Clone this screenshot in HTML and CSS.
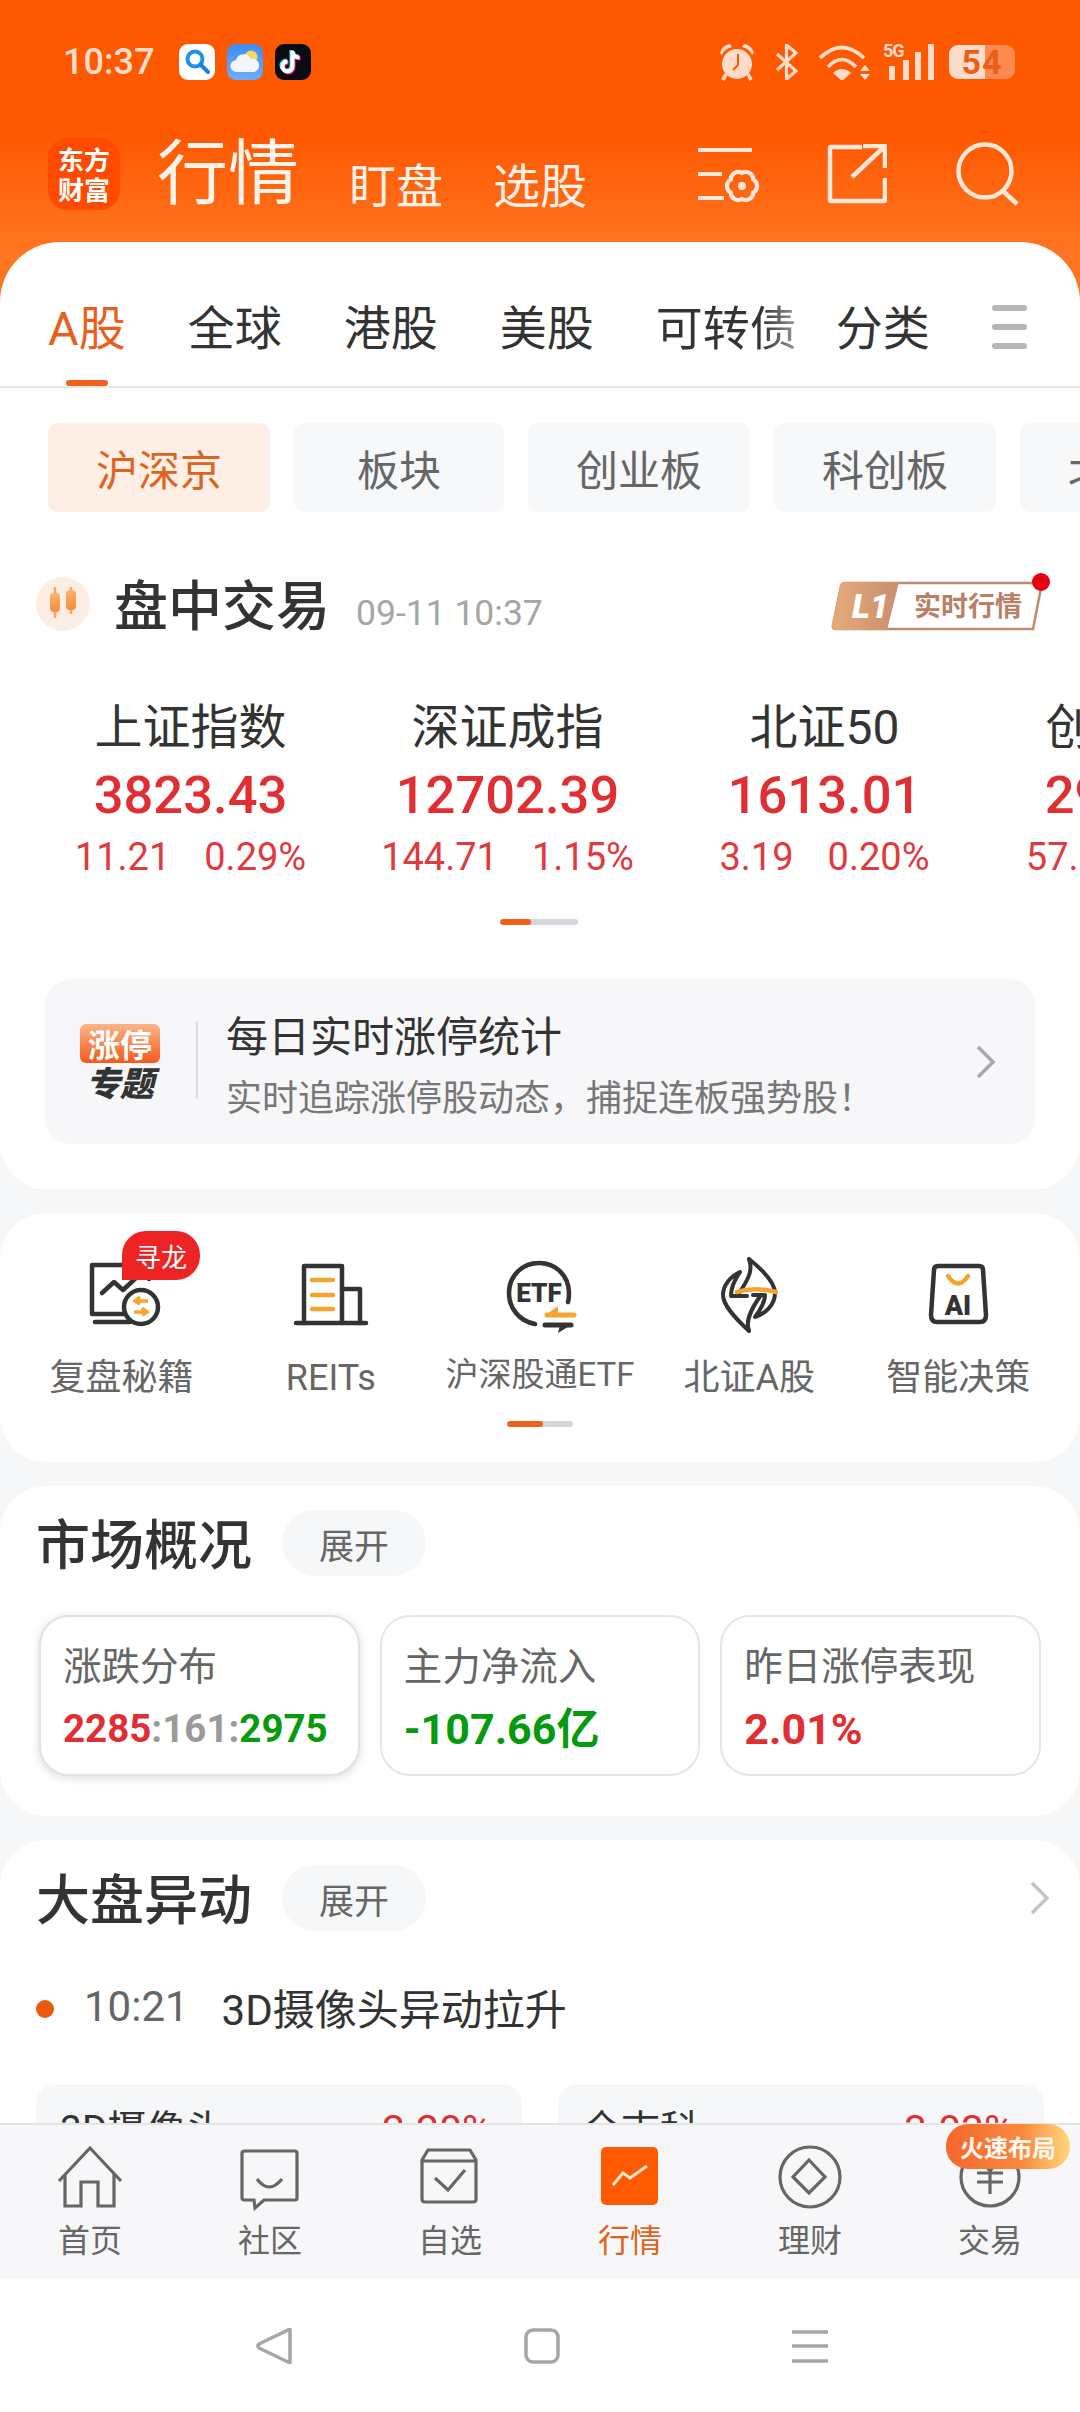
FILE: index.html
```html
<!DOCTYPE html>
<html lang="zh-CN">
<head>
<meta charset="utf-8">
<title>行情</title>
<link rel="stylesheet" href="styles.css">
</head>
<body>
<div class="app">
  <main class="main">
    <div class="hero">
      <div class="status">
        <span class="time">10:37</span>
        <div class="notif">
          <svg class="app-ic" viewBox="0 0 36 36"><rect width="36" height="36" rx="9" fill="#fff"/><circle cx="16" cy="15" r="7.5" fill="none" stroke="#1f93e8" stroke-width="4"/><path d="M22 21l7 7" stroke="#1f7fe0" stroke-width="4" stroke-linecap="round"/></svg>
          <svg class="app-ic" viewBox="0 0 36 36"><defs><linearGradient id="wx" x1="0" y1="0" x2="0" y2="1"><stop offset="0" stop-color="#3f8cf5"/><stop offset="1" stop-color="#6aaefc"/></linearGradient></defs><rect width="36" height="36" rx="9" fill="url(#wx)"/><circle cx="24" cy="13" r="6.5" fill="#f8d860"/><path d="M10 28a6 6 0 0 1-1-12 8 8 0 0 1 15-1 6.5 6.5 0 0 1 3 13z" fill="#f3f6fc"/></svg>
          <svg class="app-ic" viewBox="0 0 36 36"><rect width="36" height="36" rx="9" fill="#0b0b14"/><g fill="none" stroke-width="4"><path d="M18.5 8v15.5a5 5 0 1 1-5-5M18.5 8c0 4 3 6.500 7 6.500" stroke="#f0285a"/><path d="M16.500 6v15.500a5 5 0 1 1-5-5M16.500 6c0 4 3 6.500 7 6.500" stroke="#4fe3e6"/><path d="M17.500 7v15.500a5 5 0 1 1-5-5M17.500 7c0 4 3 6.500 7 6.500" stroke="#fff"/></g></svg>
        </div>
        <div class="sys">
          <svg class="sys-alarm" viewBox="0 0 38 38"><circle cx="19" cy="21" r="15" fill="#ffdcca"/><path d="M2 10Q4 2 12 1L14 4Q6 6 4 12zM36 10Q34 2 26 1L24 4Q32 6 34 12z" fill="#ffdcca"/><path d="M8 31l-3 6M30 31l3 6" stroke="#ffdcca" stroke-width="3.500"/><path d="M20 11v11l-5 5" fill="none" stroke="#f65a0c" stroke-width="2"/></svg>
          <svg class="sys-bt" viewBox="0 0 23 36"><path d="M2 10L21 27 11.500 35V1L21 9 2 26" fill="none" stroke="#ffdcca" stroke-width="3.200"/></svg>
          <svg class="sys-wifi" viewBox="0 0 52 36"><g fill="none" stroke="#ffdcca" stroke-width="3.600"><path d="M2 14Q24-7 46 14"/><path d="M10 23Q24 8 38 23"/></g><path d="M15 29Q24 21 33 29L24 37z" fill="#ffdcca"/><path d="M42 27l5-6 5 6zM42 30h10l-5 6z" fill="#ffdcca"/></svg>
          <div class="sig">
            <span class="five">5G</span>
            <svg class="sig-bars" viewBox="0 0 46 36"><path d="M0 22h6v14H0zM14 16h6v20h-6zM26 8h6v28h-6zM39 0h6v36h-6z" fill="#ffdcca"/></svg>
          </div>
          <div class="batt"><span class="batt-num">54</span></div>
        </div>
      </div>
      <header class="head">
        <div class="logo"><span>东方</span><span>财富</span></div>
        <h1 class="head-main">行情</h1>
        <span class="head-sub head-sub-a">盯盘</span>
        <span class="head-sub head-sub-b">选股</span>
        <div class="head-icons">
          <svg class="hi-set" viewBox="0 0 64 58"><g fill="none" stroke="#ffe7da" stroke-width="4.200"><path d="M1 5h54M1 29h24M1 53h26"/><path d="M56.300 47.500A7.500 7.500 0 0 1 45 54 7.500 7.500 0 0 1 33.700 47.500 7.500 7.500 0 0 1 33.700 34.500 7.500 7.500 0 0 1 45 28 7.500 7.500 0 0 1 56.300 34.500 7.500 7.500 0 0 1 56.300 47.500Z"/></g><circle cx="45" cy="41" r="4" fill="#ffe7da"/></svg>
          <svg class="hi-share" viewBox="0 0 60 60"><g fill="none" stroke="#ffe7da" stroke-width="4.500"><path d="M35 3H4a1 1 0 0 0-1 1v52a1 1 0 0 0 1 1h53a1 1 0 0 0 1-1V34"/><path d="M25 33L57 3M36 2h22v22"/></g></svg>
          <svg class="hi-search" viewBox="0 0 64 64"><g fill="none" stroke="#ffe7da" stroke-width="4.500"><circle cx="29" cy="29" r="26.500"/><path d="M47 49l14 13"/></g></svg>
        </div>
      </header>

      <section class="card card-first">
        <nav class="tabs">
          <span class="tab tab-on">A股</span>
          <span class="tab">全球</span>
          <span class="tab">港股</span>
          <span class="tab">美股</span>
          <span class="tab tab-fade">可转债</span>
          <span class="tab tab-near">分类</span>
          <span class="tab-menu"><i></i><i></i><i></i></span>
        </nav>
        <div class="chips">
          <span class="chip chip-on">沪深京</span>
          <span class="chip chip-sm">板块</span>
          <span class="chip">创业板</span>
          <span class="chip">科创板</span>
          <span class="chip">北交所</span>
        </div>
        <div class="trade-head">
          <svg class="candle" viewBox="0 0 54 54"><defs><linearGradient id="cd" x1="0" y1="0" x2="0" y2="1"><stop offset="0" stop-color="#ffb36b"/><stop offset="1" stop-color="#f98a3c"/></linearGradient></defs><ellipse cx="27" cy="27" rx="27" ry="27" fill="#fdeee4"/><path d="M19 10v31M35 10v27" stroke="#fba45c" stroke-width="2.500"/><rect x="14" y="16" width="10" height="19" rx="4" fill="url(#cd)"/><rect x="30" y="13" width="10" height="20" rx="4" fill="url(#cd)"/></svg>
          <h2 class="title">盘中交易</h2>
          <span class="stamp">09-11 10:37</span>
          <svg class="l1" viewBox="0 0 224 60"><defs><linearGradient id="l1g" x1="0" y1="0" x2="1" y2="0"><stop offset="0" stop-color="#e6aa78"/><stop offset="1" stop-color="#c98f70"/></linearGradient></defs><path d="M14 11H212L203 57H6Q2 57 3 53L11 14Q12 11 14 11Z" fill="#fff" stroke="#c08b70" stroke-width="2.500"/><path d="M14 10H69L57 58H6Q1 58 2 53L10 14Q11 10 14 10Z" fill="url(#l1g)"/><text class="l1-a" x="22" y="46">L1</text><text class="l1-b" x="84" y="44">实时行情</text><circle cx="211" cy="10" r="9" fill="#e60012"/></svg>
        </div>
        <div class="indices">
          <div class="idx">
            <div class="idx-name">上证指数</div>
            <div class="idx-val">3823.43</div>
            <div class="idx-chg"><span>11.21</span><span>0.29%</span></div>
          </div>
          <div class="idx">
            <div class="idx-name">深证成指</div>
            <div class="idx-val">12702.39</div>
            <div class="idx-chg"><span>144.71</span><span>1.15%</span></div>
          </div>
          <div class="idx">
            <div class="idx-name">北证50</div>
            <div class="idx-val">1613.01</div>
            <div class="idx-chg"><span>3.19</span><span>0.20%</span></div>
          </div>
          <div class="idx">
            <div class="idx-name">创业板指</div>
            <div class="idx-val">2921.76</div>
            <div class="idx-chg"><span>57.25</span><span>1.96%</span></div>
          </div>
        </div>
        <div class="pager pager-a"><i></i></div>
        <div class="banner">
          <div class="ban-logo">
            <span class="ban-top">涨停</span>
            <span class="ban-bot">专题</span>
          </div>
          <div class="ban-text">
            <div class="ban-title">每日实时涨停统计</div>
            <div class="ban-sub">实时追踪涨停股动态，捕捉连板强势股！</div>
          </div>
          <svg class="chev" viewBox="0 0 20 34"><path d="M2 2l15 15L2 32" fill="none" stroke="#a9a9ad" stroke-width="3.500"/></svg>
        </div>
      </section>
    </div>

    <section class="card quick">
      <div class="quick-grid">
        <div class="q">
          <span class="q-tag">寻龙</span>
          <svg class="q-ic" viewBox="0 0 80 80"><g fill="none" stroke="#333" stroke-width="4.500" stroke-linecap="round" stroke-linejoin="round"><path d="M50 10H10V59H47"/><path d="M67 10V24"/><path d="M13 67H48"/><path d="M20 38L32 27 41 35 56 21"/><circle cx="59" cy="52" r="17" fill="#fff"/></g><path d="M66 46H54M58 42l-5 4 5 3M52 57H64M60 53l5 4-5 3" fill="none" stroke="#f5a52f" stroke-width="3.500"/></svg>
          <span class="q-label">复盘秘籍</span>
        </div>
        <div class="q">
          <svg class="q-ic" viewBox="0 0 80 80"><g fill="none" stroke="#333" stroke-width="4.500" stroke-linecap="round" stroke-linejoin="round"><path d="M5 68H75"/><path d="M13 68V11H51V68"/><path d="M51 34H69V68"/></g><path d="M21 25H42M21 40H42M21 54H42" stroke="#f5a52f" stroke-width="4.500" stroke-linecap="round"/></svg>
          <span class="q-label">REITs</span>
        </div>
        <div class="q">
          <svg class="q-ic" viewBox="0 0 80 80"><path d="M35 69C19 66 9 53 9 38 9 21 22 8 39 8 56 8 69 21 69 38 69 41 69 44 68 47" fill="none" stroke="#333" stroke-width="4.500" stroke-linecap="round"/><text class="etf" x="39" y="47">ETF</text><path d="M47 60H74" stroke="#f5a52f" stroke-width="5" stroke-linecap="round"/><path d="M47 59L58 51V59Z" fill="#f5a52f"/><path d="M45 70H71" stroke="#333" stroke-width="5" stroke-linecap="round"/><path d="M60 70H71L58 78Z" fill="#333"/></svg>
          <span class="q-label q-label-sm">沪深股通ETF</span>
        </div>
        <div class="q">
          <svg class="q-ic" viewBox="0 0 80 80"><g fill="none" stroke="#333" stroke-width="4" stroke-linejoin="round" stroke-linecap="round"><path d="M40 4C55 16 66 28 66 38 66 50 56 59 46 62 52 54 56 46 56 40H44"/><path d="M40 4C44 14 40 24 30 38"/><path d="M40 76C25 62 14 50 14 40 14 30 22 21 31 17 26 24 22 32 22 41H38"/><path d="M40 76C36 66 42 54 52 40"/></g><path d="M28 37C40 33 55 34 67 37" fill="none" stroke="#f5a52f" stroke-width="4.500" stroke-linecap="round"/></svg>
          <span class="q-label">北证A股</span>
        </div>
        <div class="q">
          <svg class="q-ic" viewBox="0 0 80 80"><path d="M20 11H61Q65 11 65 15L68 60Q68 67 62 67H19Q13 67 13 60L16 15Q16 11 20 11Z" fill="none" stroke="#333" stroke-width="4.500"/><path d="M30 21Q40 36 50 21" fill="none" stroke="#f5a52f" stroke-width="4.500" stroke-linecap="round"/><text class="ai" x="40" y="60">AI</text></svg>
          <span class="q-label">智能决策</span>
        </div>
      </div>
      <div class="pager pager-b"><i></i></div>
    </section>

    <section class="card market">
      <div class="row-head">
        <h2 class="title">市场概况</h2>
        <span class="pill">展开</span>
      </div>
      <div class="stats">
        <div class="stat stat-on">
          <div class="stat-label">涨跌分布</div>
          <div class="stat-val"><span class="red">2285</span><span class="grey">:161:</span><span class="green">2975</span></div>
        </div>
        <div class="stat">
          <div class="stat-label">主力净流入</div>
          <div class="stat-val stat-val-lg green">-107.66亿</div>
        </div>
        <div class="stat">
          <div class="stat-label">昨日涨停表现</div>
          <div class="stat-val stat-val-lg red">2.01%</div>
        </div>
      </div>
    </section>

    <section class="card moves">
      <div class="row-head">
        <h2 class="title">大盘异动</h2>
        <span class="pill">展开</span>
        <svg class="chev chev-end" viewBox="0 0 20 34"><path d="M2 2l15 15L2 32" fill="none" stroke="#c4c4c6" stroke-width="3.500"/></svg>
      </div>
      <div class="move-line">
        <i class="dot"></i>
        <span class="move-time">10:21</span>
        <span class="move-text">3D摄像头异动拉升</span>
      </div>
      <div class="move-cards">
        <div class="move-card"><span>3D摄像头</span><span class="red move-pct">2.20%</span></div>
        <div class="move-card"><span>全志科</span><span class="red move-pct">3.03%</span></div>
      </div>
    </section>
  </main>

  <footer class="tabbar">
    <div class="t">
      <svg class="t-ic" viewBox="0 0 70 70"><path d="M4 38L35 5 66 38M10 31V63H26V39H43V63H59V31"/></svg>
      <span>首页</span>
    </div>
    <div class="t">
      <svg class="t-ic" viewBox="0 0 70 70"><path d="M10 8H60Q62 8 62 10V55Q62 57 60 57H29L20 65 19 57H10Q7 57 7 55V10Q7 8 10 8ZM22 36Q34 52 47 36"/></svg>
      <span>社区</span>
    </div>
    <div class="t">
      <svg class="t-ic" viewBox="0 0 70 70"><path d="M7 17L13 7H55L61 17V56Q61 59 58 59H10Q7 59 7 56ZM7 18H61M20 35L33 47 50 27"/></svg>
      <span>自选</span>
    </div>
    <div class="t t-on">
      <svg class="t-ic-on" viewBox="0 0 70 70"><rect x="6" y="4" width="57" height="58" rx="5" fill="#ff5a00"/><path d="M18 42L28 30 35 35 52 23" fill="none" stroke="#ffe7da" stroke-width="2.800"/></svg>
      <span>行情</span>
    </div>
    <div class="t">
      <svg class="t-ic" viewBox="0 0 70 70"><circle cx="35" cy="34" r="30"/><path d="M34 17L50 34 34 50 18 34Z"/></svg>
      <span>理财</span>
    </div>
    <div class="t">
      <svg class="t-ic" viewBox="0 0 70 70"><circle cx="35" cy="34" r="29"/><path d="M25 16L35 28 45 16M22 30H48M22 39H48M35 28V51"/></svg>
      <span>交易</span>
    </div>
    <span class="fire">火速布局</span>
  </footer>

  <div class="sysnav">
    <svg class="nav-ic" viewBox="0 0 36 36"><path d="M34 2V34Q34 36 32 34L3 20Q1 18 3 16L32 2Q34 0 34 2Z"/></svg>
    <svg class="nav-ic" viewBox="0 0 36 36"><rect x="2" y="2" width="32" height="32" rx="7"/></svg>
    <svg class="nav-ic" viewBox="0 0 36 36"><path d="M0 4H36M0 18H36M0 33H36"/></svg>
  </div>
</div>
</body>
</html>
```

FILE: styles.css
```css
* { box-sizing: border-box; }
html, body { margin: 0; padding: 0; }
body {
  background: #f6f7f9;
  font-family: Roboto, "Noto Sans CJK SC", sans-serif;
  color: #333;
}
h1, h2 { margin: 0; font-weight: 400; }
i { font-style: normal; }
svg { display: block; flex: none; }

.app { width: 1080px; height: 2412px; display: flex; flex-direction: column; overflow: hidden; }
.main { flex: 1; min-height: 0; overflow: hidden; }

.hero {
  background: linear-gradient(#fe5a00 0, #fe5700 130px, #ff7420 245px, #ff7420 300px) no-repeat 0 0 / 100% 300px;
}

/* status bar */
.status { height: 124px; display: flex; align-items: center; padding: 0 65px 0 63px; }
.time { font-size: 36px; font-weight: 500; color: #ffdcca; width: 116px; }
.notif { display: flex; gap: 12px; }
.app-ic { width: 36px; height: 36px; }
.sys { margin-left: auto; display: flex; align-items: center; }
.sys-alarm { width: 38px; height: 38px; }
.sys-bt { width: 23px; height: 36px; margin-left: 19px; }
.sys-wifi { width: 54px; height: 36px; margin-left: 19px; }
.sig { position: relative; width: 46px; height: 36px; margin-left: 18px; }
.five { position: absolute; left: -6px; top: -2px; font-size: 18px; line-height: 18px; font-weight: 700; color: #ffdcca; letter-spacing: -1px; }
.sig-bars { width: 46px; height: 36px; }
.batt {
  width: 66px; height: 34px; margin-left: 14px; border-radius: 9px;
  background: linear-gradient(90deg, #ffdcca 36px, #ff8a50 36px);
  display: flex; align-items: center; justify-content: center;
}
.batt-num { font-size: 34px; line-height: 34px; font-weight: 700; color: #e85f18; letter-spacing: 1px; }

/* header */
.head { height: 118px; padding: 14px 60px 0 48px; display: flex; align-items: flex-start; }
.logo {
  width: 72px; height: 72px; border-radius: 20px; background: #ff4a00; color: #fff;
  display: flex; flex-direction: column; align-items: center; justify-content: center;
  font-size: 26px; line-height: 30px; font-weight: 700; font-family: "Noto Sans CJK SC", sans-serif;
}
.head-main { font-size: 71px; line-height: 72px; margin-left: 37px; color: #fff3ec; }
.head-sub { font-size: 47px; line-height: 46px; margin-top: 26px; color: #fff0e8; }
.head-sub-a { margin-left: 50px; }
.head-sub-b { margin-left: 50px; }
.head-icons { margin-left: auto; display: flex; align-items: flex-start; }
.hi-set { width: 64px; height: 58px; margin-top: 7px; }
.hi-share { width: 60px; height: 60px; margin-left: 66px; margin-top: 6px; }
.hi-search { width: 64px; height: 64px; margin-left: 69px; margin-top: 4px; }

/* cards */
.card { background: #fff; border-radius: 46px; margin-top: 24px; }
.card-first { margin-top: 0; border-radius: 60px 60px 46px 46px; padding-bottom: 45px; }

/* tabs */
.tabs { height: 146px; padding: 63px 53px 0 48px; display: flex; align-items: flex-start; gap: 62px; border-bottom: 2px solid #e6e6e6; font-size: 47px; line-height: 47px; color: #333; }
.tab { display: block; flex: none; }
.tab-on { color: #e8601c; position: relative; }
.tab-on::after { content: ""; position: absolute; left: 18px; top: 75px; width: 42px; height: 6px; border-radius: 3px; background: #f0601a; }
.tab-fade { background: linear-gradient(90deg, #333 75%, #9a9a9a 100%); -webkit-background-clip: text; background-clip: text; color: transparent; }
.tab-near { margin-left: -23px; }
.tab-menu { margin-left: auto; width: 37px; display: flex; flex-direction: column; gap: 13px; padding-top: 0; }
.tab-menu i { display: block; height: 6px; border-radius: 3px; background: #b6b6b6; }

/* chips */
.chips { display: flex; gap: 24px; padding: 35px 0 0 48px; overflow: hidden; }
.chip { flex: none; width: 222px; height: 89px; border-radius: 10px; background: #f7f8fa; display: flex; align-items: center; justify-content: center; font-size: 42px; color: #666; }
.chip-sm { width: 210px; }
.chip-on { background: #fdeee6; color: #dd6420; }

/* trade header */
.trade-head { display: flex; align-items: center; height: 54px; margin-top: 65px; padding-left: 36px; position: relative; }
.candle { width: 54px; height: 54px; }
.title { font-size: 54px; line-height: 66px; font-weight: 500; color: #333; flex: none; margin-top: 8px; }
.trade-head .title { margin-left: 24px; }
.stamp { font-size: 35.5px; color: #a5a5a5; margin-left: 26px; margin-top: 17px; }
.l1 { width: 224px; height: 60px; margin-left: auto; margin-right: 26px; margin-top: -4px; }
.l1-a { font-family: Roboto, sans-serif; font-size: 34px; font-weight: 900; font-style: italic; fill: #fff; }
.l1-b { font-family: "Noto Sans CJK SC", sans-serif; font-size: 27px; font-weight: 700; fill: #b98068; }
.etf { font-family: Roboto, sans-serif; font-size: 26px; font-weight: 900; fill: #333; text-anchor: middle; }
.ai { font-family: Roboto, sans-serif; font-size: 27px; font-weight: 900; fill: #333; text-anchor: middle; }

/* indices */
.indices { display: flex; margin-top: 63px; padding-left: 32px; overflow: hidden; }
.idx { flex: 0 0 317px; text-align: center; white-space: nowrap; }
.idx-name { font-size: 48px; line-height: 68px; color: #333; }
.idx-val { font-size: 52.5px; line-height: 67px; font-weight: 500; color: #e12e33; }
.idx-chg { font-size: 38px; line-height: 56px; color: #e03a3f; display: flex; justify-content: center; gap: 34px; }

.pager { height: 6px; border-radius: 3px; background: #d3d6da; overflow: hidden; }
.pager i { display: block; height: 6px; border-radius: 3px; background: #f0601a; }
.pager-a { width: 78px; margin: 34px 0 0 500px; }
.pager-a i { width: 31px; }
.pager-b { width: 66px; margin: 21px 0 0 507px; }
.pager-b i { width: 36px; }

/* banner */
.banner { height: 165px; margin: 54px 45px 0; border-radius: 26px; background: #f7f7f9; display: flex; align-items: center; padding-left: 35px; position: relative; }
.ban-logo { width: 80px; height: 76px; display: flex; flex-direction: column; align-items: center; }
.ban-top {
  width: 80px; height: 39px; border-radius: 6px; color: #fff; font-size: 32px; line-height: 39px; font-weight: 700; text-align: center;
  background: linear-gradient(#fbb58a, #f4591a); font-family: "Noto Sans CJK SC", sans-serif; white-space: nowrap;
}
.ban-bot { font-size: 34px; line-height: 38px; font-weight: 900; font-style: italic; color: #333; font-family: "Noto Sans CJK SC", sans-serif; }
.ban-text { margin-left: 66px; position: relative; padding-top: 12px; }
.ban-text::before { content: ""; position: absolute; left: -30px; top: 26px; height: 78px; width: 2px; background: #dcdcde; }
.ban-title { font-size: 42px; line-height: 62px; color: #333; }
.ban-sub { font-size: 36px; line-height: 60px; color: #777; white-space: nowrap; }
.chev { width: 20px; height: 34px; }
.banner .chev { margin-left: auto; margin-right: 39px; }

/* quick */
.quick { height: 249px; padding-top: 42px; }
.quick-grid { display: grid; grid-template-columns: repeat(5, 209.200px); padding-left: 17px; }
.q { position: relative; display: flex; flex-direction: column; align-items: center; }
.q-ic { width: 80px; height: 80px; }
.q-label { font-size: 36px; line-height: 44px; margin-top: 21px; color: #666; white-space: nowrap; }
.q-label-sm { font-size: 33px; margin-top: 18px; margin-bottom: 3px; }
.q-tag {
  position: absolute; left: 105px; top: -24px; width: 78px; height: 49px; z-index: 1;
  background: #ee2424; color: #fff; font-size: 26px; line-height: 49px; text-align: center;
  border-radius: 24px 24px 24px 0;
  font-family: "Noto Sans CJK SC", sans-serif;
}

/* market */
.row-head { display: flex; align-items: center; height: 66px; padding-left: 36px; }
.pill { width: 144px; height: 66px; border-radius: 33px; background: #f6f7f9; margin-left: 30px; font-size: 35px; color: #666; display: flex; align-items: center; justify-content: center; }
.market { height: 330px; padding-top: 24px; }
.stats { display: flex; gap: 20px; padding: 0 39px; margin-top: 39px; }
.stat { width: 321px; height: 161px; border: 2px solid #e6e6e6; border-radius: 30px; padding: 30px 0 0 22px; background: #fff; }
.stat-on { box-shadow: 0 2px 10px rgba(0, 0, 0, .14); border-color: #e2e2e2; }
.stat-label { font-size: 38.5px; line-height: 40px; color: #666; white-space: nowrap; }
.stat-val { font-size: 38.5px; line-height: 48px; margin-top: 18px; font-weight: 700; white-space: nowrap; }
.stat-val-lg { font-size: 43px; }
.red { color: #e12e33; }
.green { color: #069a0e; }
.grey { color: #9a9a9a; }

/* moves */
.moves { height: 400px; padding-top: 25px; }
.chev-end { margin-left: auto; margin-right: 30px; }
.move-line { display: flex; align-items: center; height: 60px; margin-top: 45px; padding-left: 36px; }
.dot { width: 18px; height: 18px; border-radius: 50%; background: #e85a0c; margin-top: 6px; }
.move-time { font-size: 42px; color: #666; margin-left: 30px; }
.move-text { font-size: 42px; color: #333; margin-left: 33px; }
.move-cards { display: flex; gap: 36px; padding: 0 36px; margin-top: 48px; }
.move-card { width: 486px; height: 200px; background: #f6f7f9; border-radius: 20px; padding: 23px 30px 0 24px; display: flex; justify-content: space-between; font-size: 39px; line-height: 46px; }
.move-pct { font-size: 41px; }

/* tab bar */
.tabbar { position: relative; height: 156px; flex: none; background: #f7f7f9; border-top: 2px solid #e3e4e6; display: grid; grid-template-columns: repeat(6, 180px); padding-top: 18px; }
.t { display: flex; flex-direction: column; align-items: center; font-size: 32px; line-height: 40px; color: #666; }
.t span { margin-top: 8px; }
.t-ic, .t-ic-on { width: 70px; height: 70px; }
.t-ic { fill: none; stroke: #666; stroke-width: 3.200; }
.t-on { color: #dd6420; }
.fire {
  position: absolute; right: 10px; top: -1px; width: 124px; height: 45px; border-radius: 22px;
  background: linear-gradient(90deg, #f5662e 0, #f98a3f 62%, #ffd87c 100%);
  color: #fff8ee; font-size: 24px; line-height: 45px; font-weight: 700; text-align: center;
  font-family: "Noto Sans CJK SC", sans-serif;
}

/* system nav */
.sysnav { height: 133px; flex: none; background: #fff; display: flex; gap: 232px; padding: 49px 0 0 256px; }
.nav-ic { width: 36px; height: 36px; fill: none; stroke: #a6a6a6; stroke-width: 3.500; stroke-linejoin: round; }
```
